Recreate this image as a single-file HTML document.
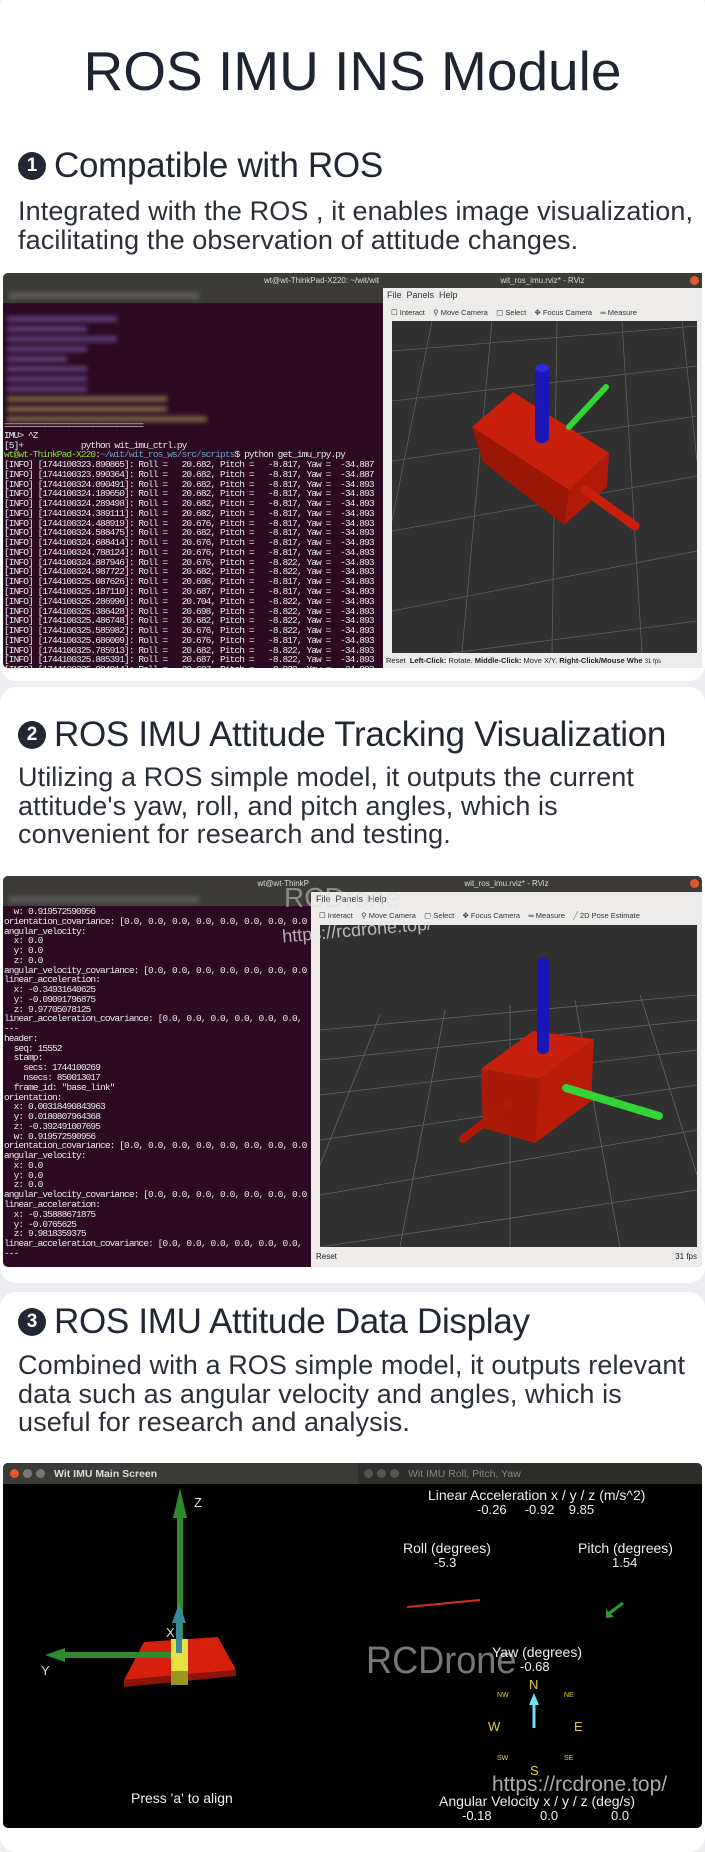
<!DOCTYPE html>
<html><head><meta charset="utf-8"><style>
*{margin:0;padding:0;box-sizing:border-box}
body{width:705px;height:1830px;background:#eceef1;font-family:"Liberation Sans",sans-serif;position:relative;overflow:hidden;color:#252a33}
.card{position:absolute;left:0;width:705px;background:#fff;border-radius:16px}
.abs{position:absolute;white-space:nowrap}
.h{font-size:35px;left:18px;display:flex;align-items:center;color:#222833;letter-spacing:-0.3px}
.num{display:inline-block;width:28px;height:28px;border-radius:50%;background:#222833;color:#fff;font-size:19px;font-weight:bold;text-align:center;line-height:28px;margin-right:8px;letter-spacing:0}
.p{font-size:27px;left:18px;line-height:28.5px;color:#2b2f37;letter-spacing:0.1px}
.term{position:absolute;background:#2d0a23;overflow:hidden;font-family:"Liberation Mono",monospace;font-size:9.5px;letter-spacing:-0.9px;color:#e8e8e8;line-height:9.77px}
.tbar{position:absolute;background:#3c3b37;color:#dcdcdc;font-size:8px;text-align:center}
.tb{font-size:7.5px;color:#333}
.bl{position:absolute;height:6px;filter:blur(2px);opacity:.45}
</style></head><body>

<div class="card" style="top:-10px;height:691px"></div>
<div class="card" style="top:687px;height:596px"></div>
<div class="card" style="top:1292px;height:560px"></div>

<div class="abs" style="left:0;width:705px;text-align:center;top:36px;font-size:55px;color:#1f2530;line-height:70px">ROS IMU INS Module</div>

<div class="abs h" style="top:146px"><span class="num">1</span>Compatible with ROS</div>
<div class="abs p" style="top:197px">Integrated with the ROS , it enables image visualization,<br>facilitating the observation of attitude changes.</div>

<!-- Screenshot 1 -->
<div class="abs" style="left:3px;top:273px;width:699px;height:395px;background:#2d0a23;border-radius:5px;overflow:hidden">
 <div class="tbar" style="left:0;top:0;width:380px;height:30px;text-align:right;padding-right:4px;line-height:15px">wt@wt-ThinkPad-X220: ~/wit/wit</div>
 <div style="position:absolute;left:6px;top:19px;width:190px;height:7px;background:#777;filter:blur(2px);opacity:.5"></div>
 <div class="bl" style="left:4px;top:43px;width:110px;background:#8a7bd0"></div>
 <div class="bl" style="left:4px;top:53px;width:80px;background:#8a7bd0"></div>
 <div class="bl" style="left:4px;top:63px;width:110px;background:#8a7bd0"></div>
 <div class="bl" style="left:4px;top:73px;width:80px;background:#8a7bd0"></div>
 <div class="bl" style="left:4px;top:83px;width:60px;background:#8a7bd0"></div>
 <div class="bl" style="left:4px;top:93px;width:80px;background:#8a7bd0"></div>
 <div class="bl" style="left:4px;top:103px;width:80px;background:#8a7bd0"></div>
 <div class="bl" style="left:4px;top:113px;width:80px;background:#8a7bd0"></div>
 <div class="bl" style="left:4px;top:123px;width:160px;background:#c8c860"></div>
 <div class="bl" style="left:4px;top:133px;width:160px;background:#c8c860"></div>
 <div class="bl" style="left:4px;top:143px;width:200px;background:#c8c860"></div>
</div>
<div class="term" style="left:4px;top:421px;width:379px;height:247px;background:transparent"><pre style="font:inherit">=============================
IMU&gt; ^Z
[5]+            python wit_imu_ctrl.py
<span style="color:#8ae234">wt@wt-ThinkPad-X220</span>:<span style="color:#729fcf">~/wit/wit_ros_ws/src/scripts</span>$ python get_imu_rpy.py
[INFO] [1744100323.890865]: Roll =   20.682, Pitch =   -8.817, Yaw =  -34.887
[INFO] [1744100323.990364]: Roll =   20.682, Pitch =   -8.817, Yaw =  -34.887
[INFO] [1744100324.090491]: Roll =   20.682, Pitch =   -8.817, Yaw =  -34.893
[INFO] [1744100324.189650]: Roll =   20.682, Pitch =   -8.817, Yaw =  -34.893
[INFO] [1744100324.289498]: Roll =   20.682, Pitch =   -8.817, Yaw =  -34.893
[INFO] [1744100324.389111]: Roll =   20.682, Pitch =   -8.817, Yaw =  -34.893
[INFO] [1744100324.488919]: Roll =   20.676, Pitch =   -8.817, Yaw =  -34.893
[INFO] [1744100324.588475]: Roll =   20.682, Pitch =   -8.817, Yaw =  -34.893
[INFO] [1744100324.688414]: Roll =   20.676, Pitch =   -8.817, Yaw =  -34.893
[INFO] [1744100324.788124]: Roll =   20.676, Pitch =   -8.817, Yaw =  -34.893
[INFO] [1744100324.887946]: Roll =   20.676, Pitch =   -8.822, Yaw =  -34.893
[INFO] [1744100324.987722]: Roll =   20.682, Pitch =   -8.822, Yaw =  -34.893
[INFO] [1744100325.087626]: Roll =   20.698, Pitch =   -8.817, Yaw =  -34.893
[INFO] [1744100325.187110]: Roll =   20.687, Pitch =   -8.817, Yaw =  -34.893
[INFO] [1744100325.286990]: Roll =   20.704, Pitch =   -8.822, Yaw =  -34.893
[INFO] [1744100325.386428]: Roll =   20.698, Pitch =   -8.822, Yaw =  -34.893
[INFO] [1744100325.486748]: Roll =   20.682, Pitch =   -8.822, Yaw =  -34.893
[INFO] [1744100325.585982]: Roll =   20.676, Pitch =   -8.822, Yaw =  -34.893
[INFO] [1744100325.686009]: Roll =   20.676, Pitch =   -8.817, Yaw =  -34.893
[INFO] [1744100325.785913]: Roll =   20.682, Pitch =   -8.822, Yaw =  -34.893
[INFO] [1744100325.885391]: Roll =   20.687, Pitch =   -8.822, Yaw =  -34.893
[INFO] [1744100325.984914]: Roll =   20.687, Pitch =   -8.822, Yaw =  -34.893</pre></div>
<!-- rviz 1 -->
<div class="abs" style="left:383px;top:273px;width:319px;height:395px;background:#edecea;overflow:hidden">
 <div class="tbar" style="left:0;top:0;width:319px;height:15px;line-height:15px">wit_ros_imu.rviz* - RViz</div>
 <div style="position:absolute;right:3px;top:3px;width:9px;height:9px;border-radius:50%;background:#e2582e"></div>
 <div class="abs tb" style="left:4px;top:17px;font-size:9px">File&nbsp; Panels&nbsp; Help</div>
 <div class="abs tb" style="left:8px;top:35px">☐ Interact &nbsp;&nbsp; ⚲ Move Camera &nbsp;&nbsp; ▢ Select &nbsp;&nbsp; ✥ Focus Camera &nbsp;&nbsp; ═ Measure</div>
 <svg style="position:absolute;left:9px;top:48px" width="305" height="332" viewBox="0 0 305 332">
  <rect width="305" height="332" fill="#303030"/>
  <g stroke="#606060" stroke-width="0.8" fill="none">
   <path d="M0 30 L305 5 M0 80 L305 45 M0 140 L305 95 M0 210 L305 155 M0 290 L305 230 M60 332 L305 300"/>
   <path d="M40 0 L0 200 M100 0 L70 332 M165 0 L160 332 M230 0 L250 332 M290 0 L305 140"/>
  </g>
  <polygon points="80,106 121,71 217,132 177,169" fill="#c8200c"/>
  <polygon points="80,106 177,169 172,204 91,141" fill="#9a1606"/>
  <polygon points="177,169 217,132 215,166 172,204" fill="#b01a08"/>
  <line x1="177" y1="106" x2="214" y2="66" stroke="#35d335" stroke-width="6" stroke-linecap="round"/>
  <rect x="143" y="46" width="14" height="76" rx="6" fill="#1a16b8"/>
  <ellipse cx="150" cy="47" rx="7" ry="4" fill="#2a2ae0"/>
  <line x1="193" y1="169" x2="243" y2="205" stroke="#c8200c" stroke-width="9" stroke-linecap="round"/>
 </svg>
 <div class="abs" style="left:0;top:381px;width:319px;height:14px;font-size:7.5px;line-height:14px;color:#222;padding-left:3px">Reset &nbsp;<b>Left-Click:</b> Rotate. <b>Middle-Click:</b> Move X/Y. <b>Right-Click/Mouse Whe</b> <span style="font-size:6px">31 fps</span></div>
</div>

<div class="abs h" style="top:715px"><span class="num">2</span>ROS IMU Attitude Tracking Visualization</div>
<div class="abs p" style="top:763px">Utilizing a ROS simple model, it outputs the current<br>attitude's yaw, roll, and pitch angles, which is<br>convenient for research and testing.</div>

<!-- Screenshot 2 -->
<div class="abs" style="left:3px;top:876px;width:699px;height:391px;background:#2d0a23;border-radius:5px;overflow:hidden">
 <div class="tbar" style="left:0;top:0;width:310px;height:30px;text-align:right;padding-right:4px;line-height:16px">wt@wt-ThinkP</div>
 <div style="position:absolute;left:6px;top:20px;width:190px;height:7px;background:#777;filter:blur(2px);opacity:.5"></div>
</div>
<div class="term" style="left:4px;top:907px;width:307px;height:360px;background:transparent"><pre style="font:inherit">  w: 0.919572590956
orientation_covariance: [0.0, 0.0, 0.0, 0.0, 0.0, 0.0, 0.0, 0.0
angular_velocity:
  x: 0.0
  y: 0.0
  z: 0.0
angular_velocity_covariance: [0.0, 0.0, 0.0, 0.0, 0.0, 0.0, 0.0
linear_acceleration:
  x: -0.34931640625
  y: -0.09091796875
  z: 9.97705078125
linear_acceleration_covariance: [0.0, 0.0, 0.0, 0.0, 0.0, 0.0,
---
header:
  seq: 15552
  stamp:
    secs: 1744100269
    nsecs: 850013017
  frame_id: "base_link"
orientation:
  x: 0.00318490843963
  y: 0.0180807964368
  z: -0.392491007695
  w: 0.919572590956
orientation_covariance: [0.0, 0.0, 0.0, 0.0, 0.0, 0.0, 0.0, 0.0
angular_velocity:
  x: 0.0
  y: 0.0
  z: 0.0
angular_velocity_covariance: [0.0, 0.0, 0.0, 0.0, 0.0, 0.0, 0.0
linear_acceleration:
  x: -0.35888671875
  y: -0.0765625
  z: 9.9818359375
linear_acceleration_covariance: [0.0, 0.0, 0.0, 0.0, 0.0, 0.0,
---</pre></div>
<div class="abs" style="left:311px;top:876px;width:391px;height:391px;background:#edecea;overflow:hidden;border-radius:0 5px 5px 0">
 <div class="tbar" style="left:0;top:0;width:391px;height:16px;line-height:16px">wit_ros_imu.rviz* - RViz</div>
 <div style="position:absolute;right:3px;top:3px;width:9px;height:9px;border-radius:50%;background:#e2582e"></div>
 <div class="abs tb" style="left:5px;top:18px;font-size:9px">File&nbsp; Panels&nbsp; Help</div>
 <div class="abs tb" style="left:8px;top:35px">☐ Interact &nbsp;&nbsp; ⚲ Move Camera &nbsp;&nbsp; ▢ Select &nbsp;&nbsp; ✥ Focus Camera &nbsp;&nbsp; ═ Measure &nbsp;&nbsp; <span style="color:#3a3">╱</span> 2D Pose Estimate</div>
 <svg style="position:absolute;left:9px;top:49px" width="377" height="322" viewBox="0 0 377 322">
  <rect width="377" height="322" fill="#303030"/>
  <g stroke="#666" stroke-width="0.8" fill="none">
   <path d="M0 105 L377 70 M0 135 L377 95 M0 170 L377 125 M0 215 L377 160 M0 270 L377 205 M0 322 L377 265"/>
   <path d="M60 90 L0 240 M125 85 L80 322 M190 80 L190 322 M255 75 L300 322 M320 70 L377 250"/>
  </g>
  <polygon points="161,144 213,106 274,114 220,154" fill="#c8200c"/>
  <polygon points="161,144 220,154 215,218 163,203" fill="#a91a08"/>
  <polygon points="220,154 274,114 271,176 215,218" fill="#b81c09"/>
  <rect x="217" y="33" width="12" height="96" rx="5" fill="#1a16b8"/>
  <line x1="246" y1="163" x2="339" y2="191" stroke="#35d335" stroke-width="8" stroke-linecap="round"/>
  <line x1="188" y1="179" x2="143" y2="214" stroke="#b01a08" stroke-width="8" stroke-linecap="round"/>
 </svg>
 <div class="abs" style="left:0;top:371px;width:391px;height:20px;font-size:8px;line-height:20px;color:#222;padding:0 5px">Reset<span style="float:right">31 fps</span></div>
</div>
<div class="abs" style="left:284px;top:882px;font-size:28px;color:rgba(220,220,220,.5)">RCDrone</div>
<div class="abs" style="left:282px;top:920px;font-size:18px;color:rgba(230,230,230,.75);transform:rotate(-5deg)">https://rcdrone.top/</div>

<div class="abs h" style="top:1302px"><span class="num">3</span>ROS IMU Attitude Data Display</div>
<div class="abs p" style="top:1351px">Combined with a ROS simple model, it outputs relevant<br>data such as angular velocity and angles, which is<br>useful for research and analysis.</div>

<!-- Screenshot 3 -->
<div class="abs" style="left:3px;top:1463px;width:699px;height:365px;background:#000;border-radius:5px;overflow:hidden">
 <div style="position:absolute;left:0;top:0;width:355px;height:21px;background:#3c3b37"></div>
 <div style="position:absolute;left:355px;top:0;width:344px;height:21px;background:#2e2d2a"></div>
 <div style="position:absolute;left:7px;top:6px;width:9px;height:9px;border-radius:50%;background:#e2582e"></div>
 <div style="position:absolute;left:20px;top:6px;width:9px;height:9px;border-radius:50%;background:#777"></div>
 <div style="position:absolute;left:33px;top:6px;width:9px;height:9px;border-radius:50%;background:#777"></div>
 <div class="abs" style="left:51px;top:5px;font-size:10.5px;font-weight:bold;color:#ddd">Wit IMU Main Screen</div>
 <div style="position:absolute;left:361px;top:6px;width:9px;height:9px;border-radius:50%;background:#555"></div>
 <div style="position:absolute;left:374px;top:6px;width:9px;height:9px;border-radius:50%;background:#555"></div>
 <div style="position:absolute;left:387px;top:6px;width:9px;height:9px;border-radius:50%;background:#555"></div>
 <div class="abs" style="left:405px;top:5px;font-size:10.5px;color:#888">Wit IMU Roll, Pitch, Yaw</div>
 <svg style="position:absolute;left:0;top:21px" width="699" height="344" viewBox="0 21 699 344">
  <polygon points="141,179 215,174 233,207 121,217" fill="#d4200c"/>
  <polygon points="121,217 233,207 233,213 121,224" fill="#8a1405"/>
  <line x1="177" y1="200" x2="177" y2="45" stroke="#2e8b2e" stroke-width="6"/>
  <polygon points="170,55 177,25 184,55" fill="#2e8b2e"/>
  <line x1="172" y1="192" x2="55" y2="192" stroke="#2e8b2e" stroke-width="6"/>
  <polygon points="62,185 42,192 62,199" fill="#2e8b2e"/>
  <rect x="168" y="176" width="17" height="46" fill="#e8e040"/>
  <rect x="168" y="208" width="17" height="14" fill="#9a9420"/>
  <line x1="176" y1="190" x2="176" y2="152" stroke="#3a8a9a" stroke-width="6"/>
  <polygon points="169,160 176,140 183,160" fill="#3a8a9a"/>
  <line x1="404" y1="144" x2="477" y2="137" stroke="#d83020" stroke-width="2"/>
  <line x1="604" y1="152" x2="620" y2="140" stroke="#2e9a2e" stroke-width="3"/>
  <polygon points="603,146 603,155 611,154" fill="#2e9a2e"/>
  <line x1="531" y1="265" x2="531" y2="240" stroke="#70e0f0" stroke-width="3"/>
  <polygon points="526,242 531,230 536,242" fill="#70e0f0"/>
 </svg>
 <div class="abs" style="left:191px;top:32px;font-size:13px;color:#ddd">Z</div>
 <div class="abs" style="left:38px;top:200px;font-size:13px;color:#ddd">Y</div>
 <div class="abs" style="left:163px;top:162px;font-size:13px;color:#ddd">X</div>
 <div class="abs" style="left:128px;top:327px;font-size:14px;color:#eee">Press 'a' to align</div>
 <div class="abs" style="left:425px;top:24px;font-size:14px;color:#eee">Linear Acceleration x / y / z (m/s^2)</div>
 <div class="abs" style="left:474px;top:39px;font-size:13px;color:#eee">-0.26 &nbsp;&nbsp;&nbsp;&nbsp;-0.92 &nbsp;&nbsp;&nbsp;9.85</div>
 <div class="abs" style="left:400px;top:77px;font-size:14px;color:#eee">Roll (degrees)</div>
 <div class="abs" style="left:431px;top:92px;font-size:13px;color:#eee">-5.3</div>
 <div class="abs" style="left:575px;top:77px;font-size:14px;color:#eee">Pitch (degrees)</div>
 <div class="abs" style="left:609px;top:92px;font-size:13px;color:#eee">1.54</div>
 <div class="abs" style="left:363px;top:177px;font-size:38px;color:#777;transform:scaleX(0.95);transform-origin:left">RCDrone</div>
 <div class="abs" style="left:489px;top:181px;font-size:14px;color:#eee">Yaw (degrees)</div>
 <div class="abs" style="left:517px;top:196px;font-size:13px;color:#eee">-0.68</div>
 <div class="abs" style="left:526px;top:214px;font-size:13px;color:#e0d040">N</div>
 <div class="abs" style="left:494px;top:229px;font-size:7px;color:#e0d040">NW</div>
 <div class="abs" style="left:561px;top:229px;font-size:7px;color:#e0d040">NE</div>
 <div class="abs" style="left:485px;top:256px;font-size:13px;color:#e0d040">W</div>
 <div class="abs" style="left:571px;top:256px;font-size:13px;color:#e0d040">E</div>
 <div class="abs" style="left:494px;top:292px;font-size:7px;color:#e0d040">SW</div>
 <div class="abs" style="left:561px;top:292px;font-size:7px;color:#e0d040">SE</div>
 <div class="abs" style="left:527px;top:300px;font-size:13px;color:#e0d040">S</div>
 <div class="abs" style="left:489px;top:310px;font-size:21px;color:#aaa">https://rcdrone.top/</div>
 <div class="abs" style="left:436px;top:330px;font-size:14px;color:#eee">Angular Velocity x / y / z (deg/s)</div>
 <div class="abs" style="left:459px;top:345px;font-size:13px;color:#eee">-0.18</div>
 <div class="abs" style="left:537px;top:345px;font-size:13px;color:#eee">0.0</div>
 <div class="abs" style="left:608px;top:345px;font-size:13px;color:#eee">0.0</div>
</div>
</body></html>
